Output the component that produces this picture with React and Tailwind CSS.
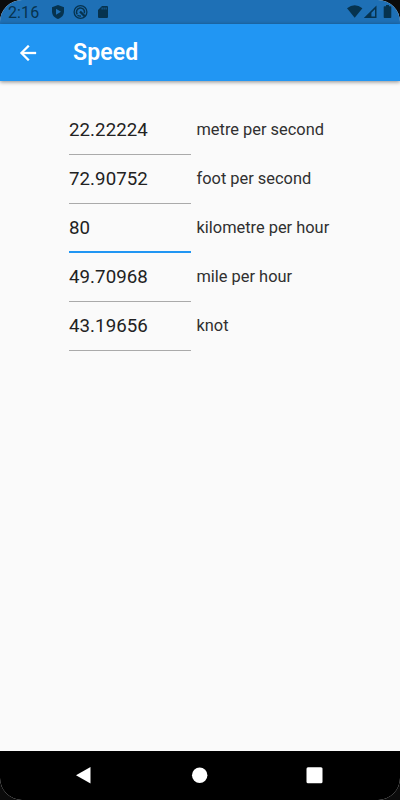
const units = [
  { value: "22.22224", label: "metre per second" },
  { value: "72.90752", label: "foot per second" },
  { value: "80", label: "kilometre per hour", active: true },
  { value: "49.70968", label: "mile per hour" },
  { value: "43.19656", label: "knot" },
];

function StatusBar() {
  return (
    <div className="flex h-6 shrink-0 items-center bg-[#1e70b6] pl-2 text-[#06334f]">
      <span className="w-[43px] pt-px text-[16px] leading-6 tracking-[0.1px]">2:16</span>
      <svg className="h-6 w-[60px]" viewBox="51 0 60 24">
        <path fill="currentColor" fillRule="evenodd" d="M58 5L64 7.3V11.6C64 15.2 61.5 18 58 19C54.500 18 52 15.200 52 11.600V7.300ZM56 8.800V14.800L61 11.800Z" />
        <circle cx="80.500" cy="12" r="6.400" fill="none" stroke="currentColor" strokeWidth="1.300" />
        <path d="M77.300 14.400A4 4 0 1 1 84.300 13.200" fill="none" stroke="currentColor" strokeWidth="1.500" />
        <path d="M77.500 15.200Q79 16.300 81 16" fill="none" stroke="currentColor" strokeWidth="1.300" />
        <path d="M80 11.500L85 16.500" stroke="currentColor" strokeWidth="2.400" />
        <path fill="currentColor" fillRule="evenodd" d="M102 6H107Q108 6 108 7V17Q108 18 107 18H99Q98 18 98 17V10ZM101.700 7.500V9.500H102.500V7.500ZM103.700 7.500V9.500H104.500V7.500ZM105.700 7.500V9.500H106.500V7.500Z" />
      </svg>
      <svg className="ml-auto h-6 w-[60px]" viewBox="340 0 60 24">
        <path fill="currentColor" d="M347 8.200Q354.700 2.200 362.400 8.200L354.700 17.800Z" />
        <path fill="currentColor" fillRule="evenodd" d="M376.500 5.500V18H363.800ZM375 9.200L371.400 12.800V16.600H375Z" />
        <path fill="currentColor" d="M386 5H389V6.300H390.500Q391.300 6.300 391.300 7V17.300Q391.300 18 390.500 18H384.500Q383.700 18 383.700 17.300V7Q383.700 6.300 384.500 6.300H386Z" />
      </svg>
    </div>
  );
}

function AppBar() {
  return (
    <header className="z-10 flex h-[57px] shrink-0 items-center bg-[#2196f3] pl-4 text-white shadow-[0_1px_4px_rgba(0,0,0,0.45)]">
      <button aria-label="Back" className="mr-[33px]">
        <svg className="size-6" viewBox="0 0 24 24" fill="currentColor" stroke="currentColor" strokeWidth="0.3">
          <path d="M20 11H7.830l5.590-5.590L12 4l-8 8 8 8 1.410-1.410L7.830 13H20v-2z" />
        </svg>
      </button>
      <h1 className="pt-px text-[23px] font-semibold leading-8 tracking-[0.150px]">Speed</h1>
    </header>
  );
}

function UnitRow({ value, label, active }) {
  return (
    <div className="flex h-[48.900px] items-start">
      <div
        className={
          "h-[49px] w-[122px] border-b pt-[12px] text-[18.700px] leading-6 tracking-[0.050px] text-[#222222] " +
          (active ? "border-b-2 border-[#2196f3]" : "border-[#aaaaaa]")
        }
      >
        {value}
      </div>
      <span className="ml-[5.500px] pt-[12px] text-[16.400px] leading-6 text-[#303030]">{label}</span>
    </div>
  );
}

function NavigationBar() {
  return (
    <nav className="h-[49px] shrink-0 bg-black">
      <svg className="h-[49px] w-[400px]" viewBox="0 751 400 49" fill="white">
        <path d="M90.500 767V783.500L76 775.200Z" />
        <circle cx="199.700" cy="775.200" r="7.700" />
        <rect x="306.500" y="767.200" width="16" height="16" rx="1.500" />
      </svg>
    </nav>
  );
}

export default function App() {
  return (
    <div className="h-[800px] w-[400px] bg-[#0b0b0b]">
      <div className="flex h-full flex-col overflow-hidden rounded-[22px] bg-[#fafafa] font-[Roboto,sans-serif]">
        <StatusBar />
        <AppBar />
        <main className="flex-1 pl-[69px] pt-[25px]">
          {units.map((unit) => (
            <UnitRow key={unit.label} {...unit} />
          ))}
        </main>
        <NavigationBar />
      </div>
    </div>
  );
}
